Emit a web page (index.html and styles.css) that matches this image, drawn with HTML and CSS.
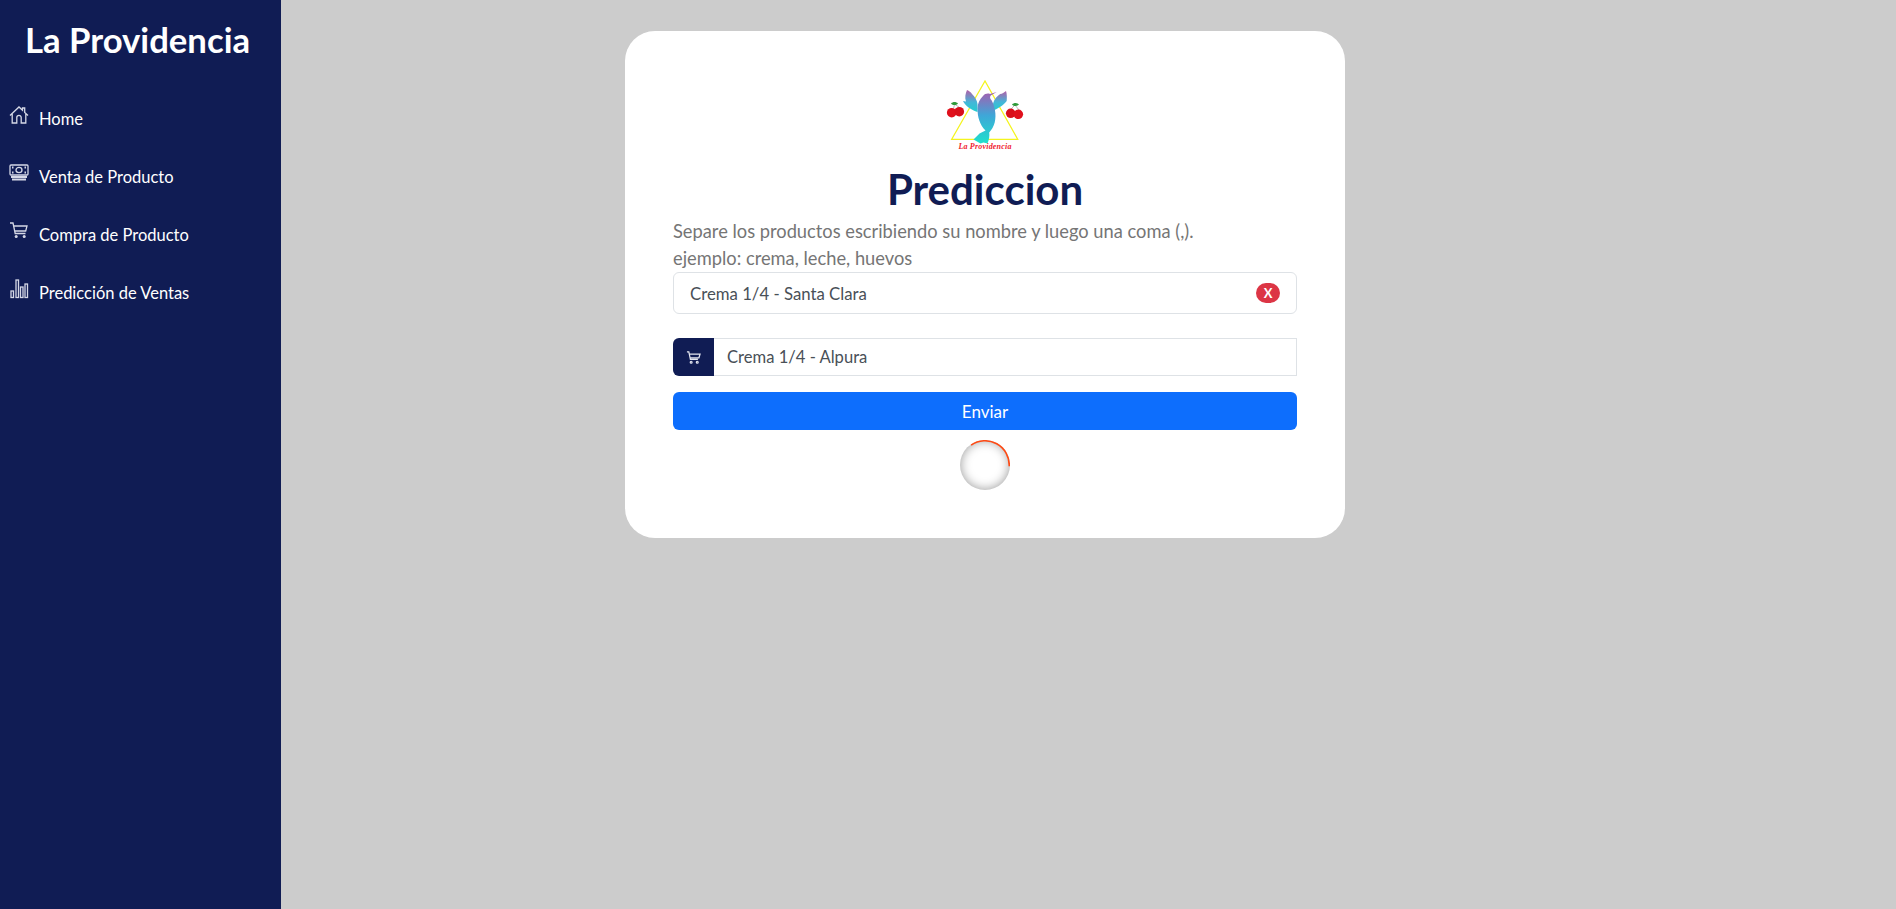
FILE: index.html
```html
<!DOCTYPE html>
<html lang="es">
<head>
    <meta charset="UTF-8">
    <meta name="viewport" content="width=device-width, initial-scale=1.0">
    <title>La Providencia</title>
    <link rel="stylesheet" href="styles.css">
</head>
<body>

<div class="layout">
    <aside class="sidebar">
        <h2 class="brand">La Providencia</h2>
        <nav class="menu">
            <a class="menu-item" href="#">
                <svg class="menu-icon" viewBox="0 0 20 20"><path d="M1 10.500 10 2l3.500 3.300V3h2.200v4.400L19 10.500M3.200 9v9h4.600v-5.500a2.200 2.200 0 0 1 4.400 0V18h4.600V9"/></svg>
                <span>Home</span>
            </a>
            <a class="menu-item" href="#">
                <svg class="menu-icon" viewBox="0 0 20 20"><rect x="1" y="2" width="18" height="10" rx="1"/><ellipse cx="10" cy="7" rx="3" ry="2.600"/><path class="thick" d="M3 4.500h1.500M15.500 4.500H17M3 9.500h1.500M15.500 9.500H17M2 14h16M3 16.500h14"/></svg>
                <span>Venta de Producto</span>
            </a>
            <a class="menu-item" href="#">
                <svg class="menu-icon" viewBox="0 0 20 20"><path d="M1 2h3l2.200 10.500h10.300M4.600 5h13.400l-1.300 5H5.600"/><circle class="dot" cx="7.200" cy="15.500" r="1.500"/><circle class="dot" cx="15.200" cy="15.500" r="1.500"/></svg>
                <span>Compra de Producto</span>
            </a>
            <a class="menu-item" href="#">
                <svg class="menu-icon" viewBox="0 0 20 20"><rect x="2" y="12" width="2.500" height="6.500"/><rect x="7" y="1" width="2.500" height="17.500"/><rect x="11.500" y="8" width="2.500" height="10.500"/><rect x="16" y="5" width="2.500" height="13.500"/></svg>
                <span>Predicción de Ventas</span>
            </a>
        </nav>
    </aside>

    <main class="content">
        <section class="card">
            <svg class="logo" viewBox="0 0 80 80">
                <defs>
                    <linearGradient id="birdGrad" x1="0" y1="0" x2="0" y2="1">
                        <stop offset="0" stop-color="#a45fb0"/>
                        <stop offset="0.45" stop-color="#3fa6d8"/>
                        <stop offset="1" stop-color="#1fe0cc"/>
                    </linearGradient>
                    <linearGradient id="wingGrad" x1="0" y1="0" x2="0" y2="1">
                        <stop offset="0" stop-color="#b35ea8"/>
                        <stop offset="0.55" stop-color="#45b5d8"/>
                        <stop offset="1" stop-color="#22cfd0"/>
                    </linearGradient>
                </defs>
                <path d="M40 2 72.700 60.300H6.700Z" fill="none" stroke="#f4f41e" stroke-width="1.300"/>
                <path d="M22 11c2 1 4 2 5 4 3 3 5 6 5.500 10v8C27 31 20 27 18 22l3 .5c-1.500-4-.5-8 1-11.500Z" fill="url(#wingGrad)"/>
                <path d="M61 12c1 3 1 6 .7 10-3 4-9 8-15 10l1.500-8c1-4 4-7 7-9 2 0 4-1.500 5.800-3Z" fill="url(#wingGrad)"/>
                <path d="M38 17c2-2.500 5-3 7-2l6.700-2-6 3.500c-1 1-1 3 1 5 3 6 5 14 3 22-1 4-3 7-5.500 10 .5 3 0 7-1.700 11l-4-1-3 1-7-4 6-6c2-1 4-2 6-3-6-6-8-14-8-22 0-5 2-9 5.500-12.500Z" fill="url(#birdGrad)"/>
                <path d="M8.700 29 9.500 25.500M14 28l-4-2.500" stroke="#777" stroke-width="0.500" fill="none"/>
                <path d="M6 24.500c2-2 5-2 7 0-2 2-5 2-7 0Z" fill="#2f9a3a"/>
                <circle cx="6.700" cy="33.700" r="4.800" fill="#e0101c"/>
                <circle cx="14.300" cy="32.700" r="4.800" fill="#d80f1a"/>
                <path d="M66 30l4-4M74 31l-4-5" stroke="#777" stroke-width="0.500" fill="none"/>
                <path d="M67 25.500c2-2 5-2 7 0-2 2-5 2-7 0Z" fill="#2f9a3a"/>
                <circle cx="65.700" cy="34.300" r="4.800" fill="#d80f1a"/>
                <circle cx="73.300" cy="35.300" r="4.800" fill="#e0101c"/>
                <text class="logo-text" x="40" y="70" text-anchor="middle">La Providencia</text>
            </svg>
            <h1 class="title">Prediccion</h1>
            <p class="hint">Separe los productos escribiendo su nombre y luego una coma (,).<br>ejemplo: crema, leche, huevos</p>

            <div class="selected">
                <span>Crema 1/4 - Santa Clara</span>
                <span class="remove">X</span>
            </div>

            <div class="input-group">
                <span class="input-icon">
                    <svg viewBox="0 0 16 16"><path d="M1 2h2l1.700 8h8M3.400 4.300H15l-1.200 4H4.200"/><circle cx="5.500" cy="13" r="1"/><circle cx="12" cy="13" r="1"/></svg>
                </span>
                <input class="input-text" type="text" value="Crema 1/4 - Alpura">
            </div>

            <button class="send-btn" type="button">Enviar</button>
            <div class="spinner">
                <svg class="spinner-arc" viewBox="0 0 50 50"><path d="M11.100 5.200A24.200 24.200 0 0 1 49.200 26.300"/></svg>
            </div>
        </section>
    </main>
</div>

</body>
</html>
```

FILE: styles.css
```css
* {
    box-sizing: border-box;
}
body {
    margin: 0;
    font-family: 'Lato', 'Noto Sans', sans-serif;
    background-color: #cccccc;
}
.layout {
    display: flex;
    min-height: 909px;
}
.sidebar {
    width: 281px;
    flex-shrink: 0;
    background-color: #101c54;
    color: #fff;
}
.brand {
    margin: 20px 0 0;
    padding-right: 6px;
    text-align: center;
    font-size: 34.700px;
    line-height: 40px;
    font-weight: 700;
}
.menu {
    display: flex;
    flex-direction: column;
    margin-top: 30px;
}
.menu-item {
    display: flex;
    align-items: flex-start;
    height: 58px;
    padding: 15px 0 0 9px;
    color: #fff;
    text-decoration: none;
    font-size: 16.500px;
    line-height: 24px;
}
.menu-item span {
    margin-left: 10px;
    padding-top: 2px;
}
.menu-icon {
    width: 20px;
    height: 20px;
    fill: none;
    stroke: #d5d8e6;
    stroke-width: 1.300;
}
.menu-icon .thick {
    stroke-width: 1.800;
}
.menu-icon .dot {
    fill: #d5d8e6;
    stroke: none;
}
.content {
    flex: 1;
    padding: 31px 0 0 344px;
}
.card {
    width: 720px;
    padding: 48px;
    background-color: #fff;
    border-radius: 30px;
}
.logo {
    display: block;
    width: 80px;
    height: 80px;
    margin: 0 auto;
}
.logo-text {
    font-family: 'Liberation Serif', serif;
    font-style: italic;
    font-weight: 700;
    font-size: 8px;
    letter-spacing: 0.200px;
    fill: #f01c30;
}
.title {
    margin: 4px 0 3px;
    text-align: center;
    font-size: 42px;
    line-height: 52px;
    font-weight: 700;
    color: #101c54;
}
.hint {
    margin: 0;
    font-size: 18.300px;
    line-height: 27px;
    color: #757575;
}
.selected {
    display: flex;
    align-items: center;
    justify-content: space-between;
    height: 42px;
    padding: 0 16px;
    border: 1px solid #dee2e6;
    border-radius: 6px;
    font-size: 16.750px;
    color: #495057;
}
.remove {
    width: 24px;
    height: 20px;
    border-radius: 10px;
    background-color: #dc3545;
    color: #fff;
    font-size: 13px;
    font-weight: 700;
    line-height: 20px;
    text-align: center;
}
.input-group {
    display: flex;
    height: 38px;
    margin-top: 24px;
}
.input-icon {
    display: flex;
    align-items: center;
    justify-content: center;
    width: 41px;
    background-color: #101c54;
    border-radius: 6px 0 0 6px;
}
.input-icon svg {
    width: 15px;
    height: 15px;
    fill: none;
    stroke: #e4e6f0;
    stroke-width: 1.300;
}
.input-text {
    flex: 1;
    min-width: 0;
    padding: 0 13px;
    border: 1px solid #dee2e6;
    border-left: none;
    font-family: inherit;
    font-size: 16.600px;
    color: #495057;
    outline: none;
}
.send-btn {
    display: block;
    width: 100%;
    height: 38px;
    margin-top: 16px;
    border: none;
    border-radius: 6px;
    background-color: #0d6efd;
    color: #fff;
    font-family: inherit;
    font-size: 17px;
}
.spinner {
    position: relative;
    width: 50px;
    height: 50px;
    margin: 10px auto 0;
    border-radius: 50%;
    background-color: #fff;
    box-shadow: inset 0 0 11px rgba(0, 0, 0, 0.4);
}
.spinner-arc {
    position: absolute;
    top: 0;
    left: 0;
    width: 50px;
    height: 50px;
    fill: none;
    stroke: #ff4a14;
    stroke-width: 1.600;
}
```
